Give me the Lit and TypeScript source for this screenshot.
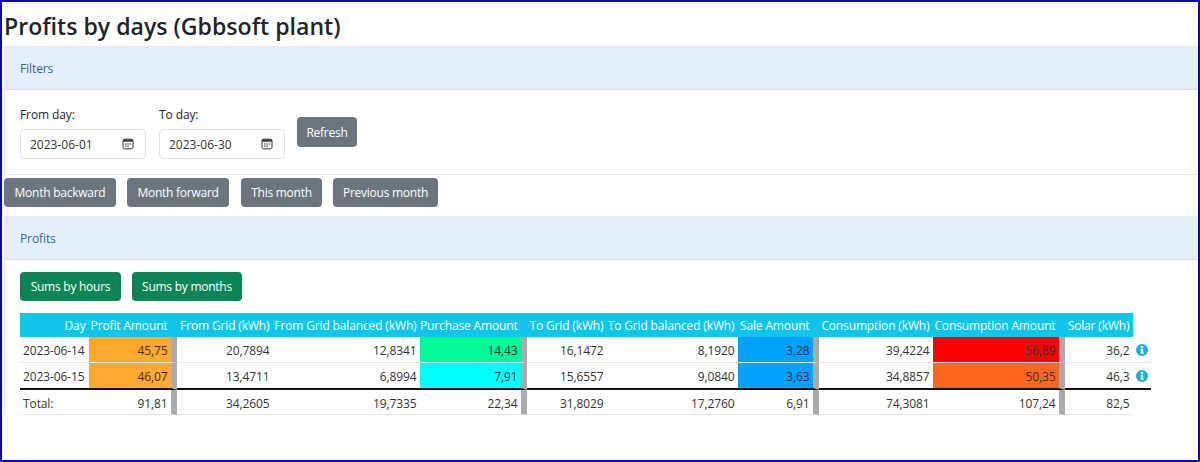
import { LitElement, html, css, svg } from "lit";
import { customElement } from "lit/decorators.js";

const cols = [69, 88, 96, 147, 107, 80, 131, 81, 114, 132, 68, 18];
const heads = ["Day", "Profit Amount", "From Grid (kWh)", "From Grid balanced (kWh)", "Purchase Amount", "To Grid (kWh)", "To Grid balanced (kWh)", "Sale Amount", "Consumption (kWh)", "Consumption Amount", "Solar (kWh)"];
const amountCols = [1, 4, 7, 9];
const rows: { cells: string[]; colors: Record<number, string> }[] = [
  { cells: ["2023-06-14", "45,75", "20,7894", "12,8341", "14,43", "16,1472", "8,1920", "3,28", "39,4224", "56,89", "36,2"],
    colors: { 1: "#ffaa2e", 4: "#00fa9a", 7: "#00a2ff", 9: "#ff0000" } },
  { cells: ["2023-06-15", "46,07", "13,4711", "6,8994", "7,91", "15,6557", "9,0840", "3,63", "34,8857", "50,35", "46,3"],
    colors: { 1: "#ffaa2e", 4: "#00ffff", 7: "#00a2ff", 9: "#ff661e" } },
];
const totals = ["Total:", "91,81", "34,2605", "19,7335", "22,34", "31,8029", "17,2760", "6,91", "74,3081", "107,24", "82,5"];

const calendar = svg`<svg class="cal" viewBox="0 0 12 12" width="12" height="12"><rect x="1" y="1.2" width="10" height="9.6" rx="1.4" fill="none" stroke="#333" stroke-width="1"/><rect x="1" y="1.2" width="10" height="2.6" fill="#444"/><rect x="3" y="5.4" width="1.6" height="1.2" fill="#555"/><rect x="5.3" y="5.4" width="1.6" height="1.2" fill="#555"/><rect x="7.6" y="5.4" width="1.6" height="1.2" fill="#555"/><rect x="3" y="7.6" width="1.6" height="1.2" fill="#555"/><rect x="5.3" y="7.6" width="1.6" height="1.2" fill="#555"/></svg>`;
const info = svg`<svg class="info" viewBox="0 0 12 12" width="12" height="12"><circle cx="6" cy="6" r="6" fill="#1ab0d8"/><rect x="4.9" y="2.1" width="2.2" height="2" fill="#fff"/><path d="M4.5 5h2.7v3.6h.6v1.1H4.3V8.6h.8V6.1h-.6z" fill="#fff"/></svg>`;

@customElement("app-root")
export class AppRoot extends LitElement {
  static styles = css`
    :host {
      display: block;
      box-sizing: border-box;
      height: 462px;
      border: 2px solid #0a0ab4;
      padding: 0 0 0 2px;
      overflow: hidden;
      background: #fff;
      color: #212529;
      font-family: "Open Sans", "Noto Sans", sans-serif;
      font-size: 12px;
      letter-spacing: -0.1px;
    }
    h1 {
      margin: 0;
      padding-top: 8px;
      height: 36px;
      font-size: 23.1px;
      line-height: 33px;
      font-weight: 600;
      letter-spacing: 0;
    }
    .card {
      border: 1px solid #e8e9eb;
      border-right: none;
    }
    .card.open { border-bottom: none; }
    .card-head {
      height: 43px;
      box-sizing: border-box;
      display: flex;
      align-items: center;
      padding: 1px 0 0 15px;
      background: #e4eefa;
      border-bottom: 1px solid #d9dde2;
      color: #2b6a94;
      font-size: 12px;
    }
    .filter-body {
      height: 84px;
      box-sizing: border-box;
      padding: 16px 15px 0;
      display: flex;
      gap: 12px;
      align-items: flex-start;
    }
    .field { display: flex; flex-direction: column; gap: 6px; }
    .field + .field { margin-left: 1px; }
    label { font-size: 12px; line-height: 17px; }
    .date {
      width: 126px;
      height: 30px;
      box-sizing: border-box;
      border: 1px solid #dee2e6;
      border-radius: 4px;
      display: flex;
      align-items: center;
      justify-content: space-between;
      padding: 0 11px 0 9px;
      font-size: 12px;
      letter-spacing: 0;
      color: #333;
    }
    button {
      font: inherit;
      font-size: 12px;
      letter-spacing: -0.25px;
      color: #fff;
      background: #6c757d;
      border: none;
      border-radius: 4px;
      padding: 0;
      height: 29px;
    }
    .refresh { width: 60px; height: 30px; margin-top: 11px; }
    .month-row {
      display: flex;
      gap: 11px;
      margin-top: 3px;
      margin-bottom: 9px;
    }
    .m1 { width: 112px; } .m2 { width: 102px; } .m3 { width: 81px; margin-left: 1px; } .m4 { width: 105px; }
    .profit-body { padding: 12px 15px 0; }
    .green-row { display: flex; gap: 11px; margin-bottom: 12px; }
    .green { background: #0d8458; height: 29px; }
    .g1 { width: 101px; } .g2 { width: 110px; }
    table {
      border-collapse: separate;
      border-spacing: 0;
      table-layout: fixed;
      width: 1131px;
      font-size: 12px;
    }
    th {
      background: #0dc6ea;
      color: #fff;
      font-weight: 400;
      text-align: right;
      height: 24px;
      padding: 0 3.5px 0 0;
      white-space: nowrap;
      letter-spacing: -0.14px;
    }
    th.amount { padding-right: 9.5px; }
    th.blank { background: transparent; }
    td {
      box-sizing: border-box;
      text-align: right;
      height: 26px;
      padding: 2px 3.5px 0 0;
      border-bottom: 1px solid #e5e7ea;
      white-space: nowrap;
      color: #333;
    }
    td.first { text-align: left; padding-left: 3px; }
    td.amount { border-right: 6px solid #aaa; }
    tr.last td { border-bottom: 2px solid #111; height: 27px; }
    tr.tot td { height: 25px; }
    td.icon { text-align: left; padding: 0 0 0 3px; }
    tr.tot td.icon { border: none; }
    .info { display: block; }
    .cal { flex: none; }
  `;

  private cell(value: string, i: number, color?: string) {
    const cls = [i === 0 ? "first" : "", amountCols.includes(i) ? "amount" : ""].join(" ");
    return html`<td class=${cls} style=${color ? `background:${color}` : ""}>${value}</td>`;
  }

  render() {
    return html`
      <h1>Profits by days (Gbbsoft plant)</h1>
      <section class="card">
        <div class="card-head">Filters</div>
        <div class="filter-body">
          <div class="field"><label>From day:</label><div class="date">2023-06-01 ${calendar}</div></div>
          <div class="field"><label>To day:</label><div class="date">2023-06-30 ${calendar}</div></div>
          <button class="refresh">Refresh</button>
        </div>
      </section>
      <div class="month-row">
        <button class="m1">Month backward</button>
        <button class="m2">Month forward</button>
        <button class="m3">This month</button>
        <button class="m4">Previous month</button>
      </div>
      <section class="card open">
        <div class="card-head">Profits</div>
        <div class="profit-body">
          <div class="green-row">
            <button class="green g1">Sums by hours</button>
            <button class="green g2">Sums by months</button>
          </div>
          <table>
            <colgroup>${cols.map((w) => html`<col style="width:${w}px" />`)}</colgroup>
            <thead><tr>${heads.map((h, i) => html`<th class=${amountCols.includes(i) ? "amount" : ""}>${h}</th>`)}<th class="blank"></th></tr></thead>
            <tbody>
              ${rows.map((r, ri) => html`<tr class=${ri === rows.length - 1 ? "last" : ""}>
                ${r.cells.map((c, i) => this.cell(c, i, r.colors[i]))}
                <td class="icon">${info}</td>
              </tr>`)}
              <tr class="tot">${totals.map((c, i) => this.cell(c, i))}<td class="icon"></td></tr>
            </tbody>
          </table>
        </div>
      </section>
    `;
  }
}
